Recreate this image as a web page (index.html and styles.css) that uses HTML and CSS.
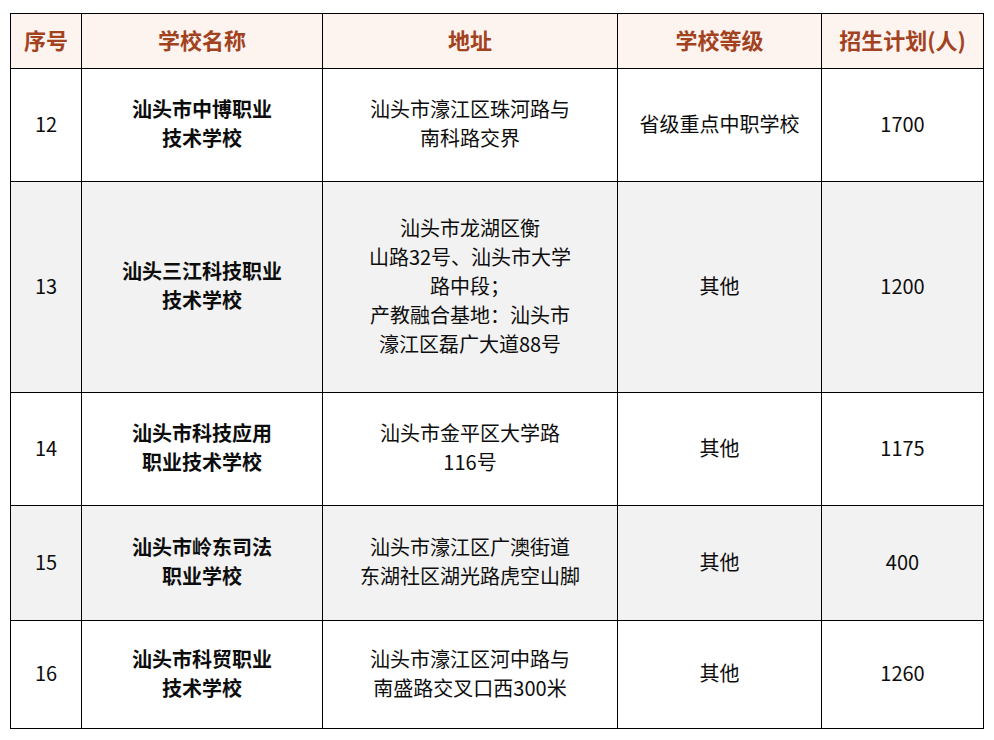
FILE: index.html
```html
<!DOCTYPE html>
<html lang="zh-CN">
<head>
<meta charset="utf-8">
<link rel="stylesheet" href="styles.css">
</head>
<body>
<table class="schools">
  <colgroup>
    <col class="c-no"><col class="c-name"><col class="c-addr"><col class="c-level"><col class="c-plan">
  </colgroup>
  <thead>
    <tr class="head">
      <th>序号</th><th>学校名称</th><th>地址</th><th>学校等级</th><th>招生计划(人)</th>
    </tr>
  </thead>
  <tbody>
    <tr class="r12">
      <td class="num">12</td>
      <td class="name">汕头市中博职业<br>技术学校</td>
      <td>汕头市濠江区珠河路与<br>南科路交界</td>
      <td>省级重点中职学校</td>
      <td class="num">1700</td>
    </tr>
    <tr class="r13 alt">
      <td class="num">13</td>
      <td class="name">汕头三江科技职业<br>技术学校</td>
      <td>汕头市龙湖区衡<br>山路32号、汕头市大学<br>路中段；<br>产教融合基地：汕头市<br>濠江区磊广大道88号</td>
      <td>其他</td>
      <td class="num">1200</td>
    </tr>
    <tr class="r14">
      <td class="num">14</td>
      <td class="name">汕头市科技应用<br>职业技术学校</td>
      <td>汕头市金平区大学路<br>116号</td>
      <td>其他</td>
      <td class="num">1175</td>
    </tr>
    <tr class="r15 alt">
      <td class="num">15</td>
      <td class="name">汕头市岭东司法<br>职业学校</td>
      <td>汕头市濠江区广澳街道<br>东湖社区湖光路虎空山脚</td>
      <td>其他</td>
      <td class="num">400</td>
    </tr>
    <tr class="r16">
      <td class="num">16</td>
      <td class="name">汕头市科贸职业<br>技术学校</td>
      <td>汕头市濠江区河中路与<br>南盛路交叉口西300米</td>
      <td>其他</td>
      <td class="num">1260</td>
    </tr>
  </tbody>
</table>
</body>
</html>
```
FILE: styles.css
```css
html, body {
  margin: 0;
  padding: 0;
  background: #ffffff;
}
body {
  padding: 13px 0 0 10px;
  font-family: "Noto Sans CJK SC", "Noto Sans", sans-serif;
  color: #0d0d0d;
}
.schools {
  border-collapse: collapse;
  table-layout: fixed;
  width: 973px;
}
.c-no { width: 71px; }
.c-name { width: 241px; }
.c-addr { width: 295px; }
.c-level { width: 204px; }
.c-plan { width: 162px; }
.schools th,
.schools td {
  border: 1.3px solid #000000;
  text-align: center;
  vertical-align: middle;
  padding: 0 0 4px 0;
  font-size: 20px;
  line-height: 29px;
}
.schools th {
  background: #fdf3ef;
  color: #a2421e;
  font-weight: 700;
  font-size: 22px;
  padding-bottom: 3px;
}
.head { height: 55px; }
.r12 { height: 113px; }
.r13 { height: 211px; }
.r14 { height: 113px; }
.r15 { height: 115px; }
.r16 { height: 108px; }
.alt td { background: #f2f2f2; }
.name { font-weight: 700; }
.num { font-size: 20.5px; }
```
